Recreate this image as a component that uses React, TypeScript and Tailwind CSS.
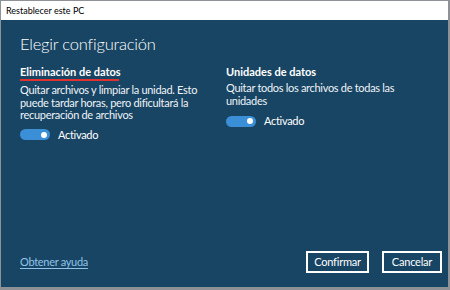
import React from "react";

function Toggle() {
  return (
    <div className="flex items-center h-[12px]">
      <div className="w-[30px] h-[11px] rounded-full bg-[#3b8fd6] flex items-center justify-end pr-[3px]">
        <div className="w-[6px] h-[6px] rounded-full bg-white" />
      </div>
      <span className="text-[11px] tracking-[-0.3px] text-white ml-[8px] leading-[12px]">Activado</span>
    </div>
  );
}

export default function App() {
  return (
    <div
      className="w-[450px] h-[290px] bg-[#8e9296] pt-[1px] pl-[1px] pr-[2px] pb-[3px] flex flex-col"
      style={{ fontFamily: 'Lato, "Noto Sans", sans-serif' }}
    >
      <div className="h-[19px] bg-white flex items-center pl-[5px] text-[9px] text-black shrink-0">
        Restablecer este PC
      </div>
      <div className="flex-1 bg-[#184563] flex flex-col pl-[19px] pr-[6px] pt-[13px] pb-[14px] text-white">
        <div className="text-[16.5px] font-light leading-[23px] tracking-[-0.2px]">Elegir configuración</div>
        <div className="flex mt-[9px]">
          <div className="w-[205px] flex flex-col">
            <div className="text-[11px] font-bold leading-[13px]">Eliminación de datos</div>
            <div className="h-[2px] w-[99px] bg-[#e2312f] mt-[1px]" />
            <div className="w-[185px] text-[11px] tracking-[-0.3px] leading-[12.5px] mt-[3px] text-[#eef3f7]">
              Quitar archivos y limpiar la unidad. Esto puede tardar horas, pero dificultará la recuperación de archivos
            </div>
            <div className="mt-[7px]">
              <Toggle />
            </div>
          </div>
          <div className="w-[200px] ml-[1px] flex flex-col">
            <div className="text-[11px] font-bold leading-[13px]">Unidades de datos</div>
            <div className="w-[180px] text-[11px] tracking-[-0.3px] leading-[12.5px] mt-[4px] text-[#eef3f7]">
              Quitar todos los archivos de todas las unidades
            </div>
            <div className="mt-[8px]">
              <Toggle />
            </div>
          </div>
        </div>
        <div className="flex-1" />
        <div className="flex items-center">
          <span className="text-[11px] tracking-[-0.3px] text-[#8fc3ea] underline underline-offset-2">Obtener ayuda</span>
          <div className="flex-1" />
          <button className="h-[22px] w-[63px] border-2 border-white text-[11px] tracking-[-0.2px] text-white bg-[#184563]">
            Confirmar
          </button>
          <button className="h-[22px] w-[60px] border-2 border-white text-[11px] tracking-[-0.2px] text-white ml-[13px] bg-[#184563]">
            Cancelar
          </button>
        </div>
      </div>
    </div>
  );
}
